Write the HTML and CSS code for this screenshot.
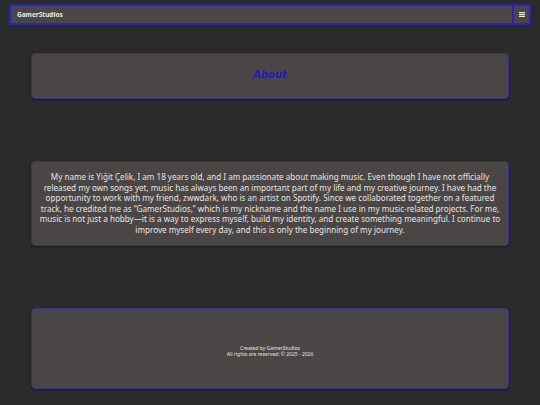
FILE: index.html
```html
<!DOCTYPE html>
<html lang="en">
<head>
<meta charset="utf-8">
<title>GamerStudios - About</title>
<link rel="stylesheet" href="styles.css">
</head>
<body>
<header class="navbar">
  <span class="brand">GamerStudios</span>
  <button class="menu-btn" aria-label="Menu">
    <svg width="6" height="5" viewBox="0 0 6 5"><rect x="0" y="0" width="6" height="1.2" fill="#e8e8e8"/><rect x="0" y="1.9" width="6" height="1.2" fill="#e8e8e8"/><rect x="0" y="3.8" width="6" height="1.2" fill="#e8e8e8"/></svg>
  </button>
</header>
<main class="content">
  <section class="card title-card">
    <h1 class="title">About</h1>
  </section>
  <section class="card text-card">
    <p class="bio">My name is Yiğit Çelik, I am 18 years old, and I am passionate about making music. Even though I have not officially<br>released my own songs yet, music has always been an important part of my life and my creative journey. I have had the<br>opportunity to work with my friend, zwwdark, who is an artist on Spotify. Since we collaborated together on a featured<br>track, he credited me as “GamerStudios,” which is my nickname and the name I use in my music-related projects. For me,<br>music is not just a hobby—it is a way to express myself, build my identity, and create something meaningful. I continue to<br>improve myself every day, and this is only the beginning of my journey.</p>
  </section>
  <footer class="card footer-card">
    <p class="foot">Created by GamerStudios<br>All rights are reserved: © 2025 - 2026</p>
  </footer>
</main>
</body>
</html>
```
FILE: styles.css
```css
html, body {
  margin: 0;
  padding: 0;
}
body {
  background: #2c2b2b;
  width: 540px;
  height: 405px;
  overflow: hidden;
  font-family: "Noto Sans", "DejaVu Sans", sans-serif;
  color: #e6e4e2;
}
.navbar {
  margin: 4px 9px 0 9px;
  height: 21px;
  box-sizing: border-box;
  background: #4a4645;
  border: 2px solid #2626b8;
  border-radius: 2px;
  box-shadow: 0 0 2px #2020a0;
  display: flex;
  align-items: center;
  justify-content: space-between;
  padding-left: 6px;
}
.brand {
  font-size: 6.5px;
  font-weight: 700;
  color: #ecebea;
}
.menu-btn {
  height: 21px;
  width: 19px;
  margin: -2px -2px -2px 0;
  box-sizing: border-box;
  background: #4a4645;
  border: 2px solid #2626b8;
  border-radius: 2px;
  display: flex;
  align-items: center;
  justify-content: center;
  padding: 0;
}
.menu-btn svg { display: block; }
.content {
  padding: 0 31px;
  display: flex;
  flex-direction: column;
}
.card {
  background: #4a4645;
  border: 1.5px solid #3a2f86;
  border-radius: 4px;
  box-shadow: 0 1px 2px rgba(0,0,0,0.4);
  box-sizing: border-box;
}
.title-card {
  margin-top: 28px;
  height: 46px;
  display: flex;
  align-items: center;
  justify-content: center;
  padding-bottom: 4px;
}
.title {
  margin: 0;
  font-family: "DejaVu Sans", sans-serif;
  font-style: italic;
  font-weight: 700;
  font-size: 10px;
  color: #1c1cc4;
}
.text-card {
  margin-top: 62px;
  height: 85px;
  display: flex;
  align-items: center;
  justify-content: center;
  padding: 0;
}
.bio {
  margin: 0;
  font-size: 8.1px;
  line-height: 10.5px;
  white-space: nowrap;
  text-align: center;
}
.footer-card {
  margin-top: 62px;
  height: 81px;
  display: flex;
  align-items: center;
  justify-content: center;
  padding-top: 5px;
}
.foot {
  margin: 0;
  font-size: 5px;
  line-height: 6.5px;
  text-align: center;
}
```
